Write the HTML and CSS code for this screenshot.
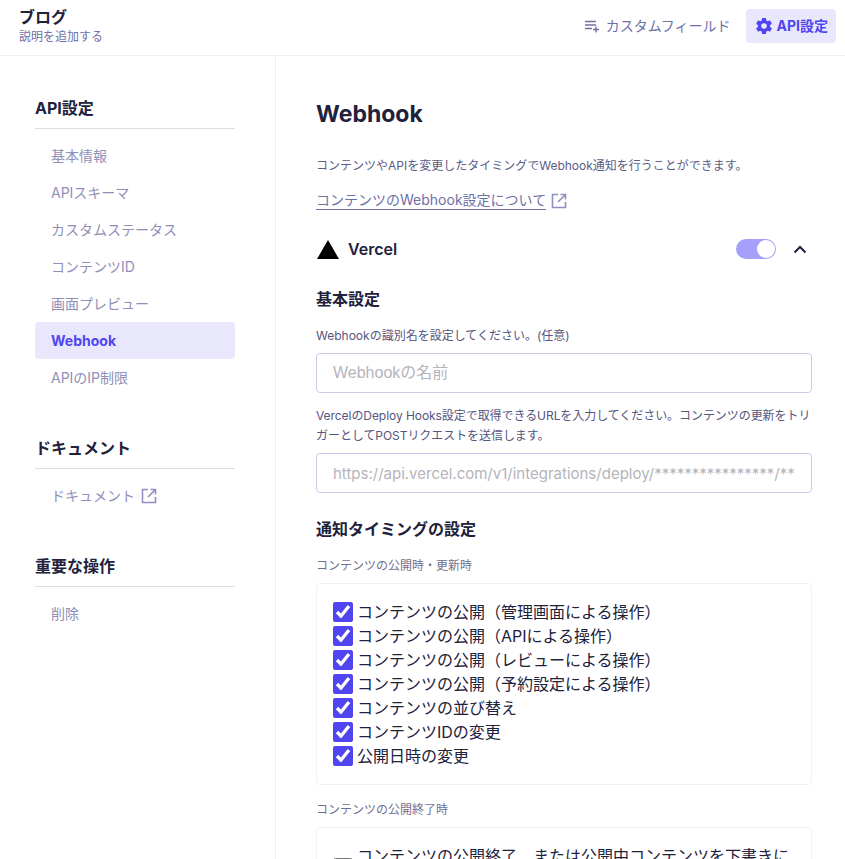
FILE: index.html
```html
<!DOCTYPE html>
<html lang="ja">

<head>
  <meta charset="UTF-8" />
  <meta name="viewport" content="width=device-width, initial-scale=1" />
  <title>Webhook</title>
  <link rel="stylesheet" href="styles.css">
</head>

<body>

  <header class="topbar">
    <div class="service">
      <h1>ブログ</h1>
      <p>説明を追加する</p>
    </div>
    <nav class="topnav">
      <a class="topnav-link" href="#">
        <svg class="icon" viewBox="0 0 16 16" fill="none" stroke="currentColor" stroke-width="1.4">
          <path d="M1 3.500h11M1 7h11M1 10.500h7M12 8.500v6M9 11.500h6" />
        </svg>
        カスタムフィールド
      </a>
      <a class="topnav-link active" href="#">
        <svg class="icon" viewBox="2 2 20 20" fill="currentColor">
          <path fill-rule="evenodd" d="M19.4 13c.04-.33.06-.66.06-1s-.02-.67-.06-1l2.11-1.65c.19-.15.24-.42.12-.64l-2-3.46c-.12-.22-.39-.3-.61-.22l-2.49 1c-.52-.4-1.08-.73-1.69-.98l-.38-2.65A.49.49 0 0 0 14 2h-4c-.25 0-.46.18-.49.42l-.38 2.65c-.61.25-1.17.59-1.69.98l-2.49-1c-.23-.09-.49 0-.61.22l-2 3.46c-.13.22-.07.49.12.64L4.57 11c-.04.33-.07.67-.07 1s.03.67.07 1l-2.11 1.65c-.19.15-.24.42-.12.64l2 3.46c.12.22.39.3.61.22l2.49-1c.52.4 1.08.73 1.69.98l.38 2.65c.03.24.24.42.49.42h4c.25 0 .46-.18.49-.42l.38-2.65c.61-.25 1.17-.59 1.69-.98l2.49 1c.23.09.49 0 .61-.22l2-3.46c.12-.22.07-.49-.12-.64L19.4 13zM12 15.500a3.500 3.500 0 1 1 0-7 3.500 3.500 0 0 1 0 7z" />
        </svg>
        API設定
      </a>
    </nav>
  </header>

  <div class="layout">
    <aside class="sidebar">
      <section class="side-group">
        <h2>API設定</h2>
        <ul>
          <li><a href="#">基本情報</a></li>
          <li><a href="#">APIスキーマ</a></li>
          <li><a href="#">カスタムステータス</a></li>
          <li><a href="#">コンテンツID</a></li>
          <li><a href="#">画面プレビュー</a></li>
          <li><a class="current" href="#">Webhook</a></li>
          <li><a href="#">APIのIP制限</a></li>
        </ul>
      </section>
      <section class="side-group">
        <h2>ドキュメント</h2>
        <ul>
          <li>
            <a href="#">ドキュメント
              <svg class="ext" viewBox="0 0 16 16" fill="none" stroke="currentColor" stroke-width="1.6">
                <path d="M7 1.500H1.500v13h13V9M9.500 1.500h5v5M14.500 1.500L7 9" />
              </svg>
            </a>
          </li>
        </ul>
      </section>
      <section class="side-group">
        <h2>重要な操作</h2>
        <ul>
          <li><a href="#">削除</a></li>
        </ul>
      </section>
    </aside>

    <main class="content">
      <h2 class="page-title">Webhook</h2>
      <p class="lead">コンテンツやAPIを変更したタイミングでWebhook通知を行うことができます。</p>
      <p class="doc-link">
        <a href="#">コンテンツのWebhook設定について</a>
        <svg class="ext" viewBox="0 0 16 16" fill="none" stroke="currentColor" stroke-width="1.6">
          <path d="M7 1.500H1.500v13h13V9M9.500 1.500h5v5M14.500 1.500L7 9" />
        </svg>
      </p>

      <div class="hook-head">
        <svg class="vercel" viewBox="0 0 22 19" fill="#000">
          <path d="M11 0l11 19H0z" />
        </svg>
        <span class="hook-name">Vercel</span>
        <span class="switch"><span class="knob"></span></span>
        <svg class="chevron" viewBox="0 0 14 9" fill="none" stroke="currentColor" stroke-width="2">
          <path d="M1.500 7.500L7 2l5.500 5.500" />
        </svg>
      </div>

      <h3>基本設定</h3>
      <label class="field-label">Webhookの識別名を設定してください。(任意)</label>
      <input class="text-input" type="text" placeholder="Webhookの名前" />
      <label class="field-label url-label">VercelのDeploy Hooks設定で取得できるURLを入力してください。コンテンツの更新をトリガーとしてPOSTリクエストを送信します。</label>
      <input class="text-input url-input" type="text" placeholder="https://api.vercel.com/v1/integrations/deploy/****************/**********" />

      <h3 class="timing-title">通知タイミングの設定</h3>
      <p class="group-label">コンテンツの公開時・更新時</p>
      <div class="check-box">
        <label class="check"><input type="checkbox" checked /><span>コンテンツの公開（管理画面による操作）</span></label>
        <label class="check"><input type="checkbox" checked /><span>コンテンツの公開（APIによる操作）</span></label>
        <label class="check"><input type="checkbox" checked /><span>コンテンツの公開（レビューによる操作）</span></label>
        <label class="check"><input type="checkbox" checked /><span>コンテンツの公開（予約設定による操作）</span></label>
        <label class="check"><input type="checkbox" checked /><span>コンテンツの並び替え</span></label>
        <label class="check"><input type="checkbox" checked /><span>コンテンツIDの変更</span></label>
        <label class="check"><input type="checkbox" checked /><span>公開日時の変更</span></label>
      </div>
      <p class="group-label">コンテンツの公開終了時</p>
      <div class="check-box">
        <label class="check"><input type="checkbox" /><span>コンテンツの公開終了、または公開中コンテンツを下書きに変更した時</span></label>
      </div>
    </main>
  </div>

</body>

</html>
```

FILE: styles.css
```css
* {
  box-sizing: border-box;
}

html,
body {
  height: 100%;
}

body {
  margin: 0;
  overflow: hidden;
  background-color: #fff;
  color: #21213b;
  font-family: Inter, 'Noto Sans CJK JP', sans-serif;
}

h1,
h2,
h3,
p,
ul {
  margin: 0;
  padding: 0;
}

a {
  color: inherit;
  text-decoration: none;
}

.topbar {
  display: flex;
  align-items: flex-start;
  justify-content: space-between;
  height: 56px;
  padding: 0 9px 0 19px;
  border-bottom: 1px solid #f0f0f3;
}

.service {
  padding-top: 7px;
}

.service h1 {
  font-size: 16px;
  line-height: 20px;
  font-weight: 700;
}

.service p {
  margin-top: 2px;
  font-size: 12px;
  line-height: 16px;
  color: #6f6fa8;
}

.topnav {
  display: flex;
  align-items: center;
  gap: 7px;
  margin-top: 9px;
}

.topnav-link {
  display: flex;
  align-items: center;
  gap: 6px;
  height: 34px;
  padding: 0 8px;
  border-radius: 4px;
  font-size: 14px;
  line-height: 20px;
  color: #6f6fa8;
}

.topnav-link.active {
  gap: 5px;
  background-color: #e8e7fc;
  color: #4f46f0;
  font-weight: 700;
  padding: 0 8px 0 10px;
}

.icon {
  width: 16px;
  height: 16px;
  flex: none;
}

.layout {
  display: flex;
  height: calc(100% - 56px);
}

.sidebar {
  flex: none;
  width: 276px;
  padding: 41px 40px 0 35px;
  border-right: 1px solid #f0f0f3;
}

.side-group {
  margin-bottom: 41px;
}

.side-group h2 {
  height: 32px;
  font-size: 16px;
  line-height: 22px;
  font-weight: 700;
  border-bottom: 1px solid #dcdce2;
}

.side-group ul {
  list-style: none;
  margin-top: 8px;
}

.side-group a {
  display: flex;
  align-items: center;
  gap: 6px;
  height: 37px;
  padding-left: 16px;
  border-radius: 4px;
  font-size: 14px;
  line-height: 20px;
  color: #8f8fb8;
}

.side-group a.current {
  background-color: #e8e7fc;
  color: #4f46f0;
  font-weight: 700;
}

.ext {
  width: 16px;
  height: 16px;
  flex: none;
  color: #8f8fc0;
}

.content {
  flex: 1;
  min-width: 0;
  padding: 43px 33px 0 40px;
}

.page-title {
  font-size: 23px;
  line-height: 30px;
  font-weight: 700;
}

.lead {
  margin-top: 28px;
  font-size: 12px;
  line-height: 18px;
  color: #5c5c85;
}

.doc-link {
  display: flex;
  align-items: center;
  gap: 5px;
  margin-top: 16px;
  font-size: 14px;
  line-height: 20px;
  color: #6f6fa8;
}

.doc-link a {
  border-bottom: 1px solid #6f6fa8;
  line-height: 18px;
}

.hook-head {
  display: flex;
  align-items: center;
  height: 24px;
  margin-top: 27px;
}

.vercel {
  width: 22px;
  height: 19px;
  margin-left: 1px;
}

.hook-name {
  flex: 1;
  margin-left: 9px;
  font-size: 16px;
  line-height: 20px;
  font-weight: 600;
}

.switch {
  display: flex;
  justify-content: flex-end;
  align-items: center;
  width: 40px;
  height: 20px;
  padding: 0 1px;
  border-radius: 10px;
  background-color: #a5a1fa;
}

.knob {
  width: 18px;
  height: 18px;
  border-radius: 50%;
  background-color: #fff;
}

.chevron {
  width: 14px;
  height: 9px;
  margin: 0 5px 0 17px;
}

.content h3 {
  margin-top: 27px;
  font-size: 16px;
  line-height: 22px;
  font-weight: 700;
}

.field-label {
  display: block;
  margin-top: 16px;
  font-size: 12px;
  line-height: 20px;
  color: #55557e;
}

.url-label {
  margin-top: 13px;
  letter-spacing: -0.06px;
}

.text-input {
  display: block;
  width: 100%;
  height: 40px;
  margin-top: 7px;
  padding: 0 16px;
  border: 1px solid #cbc8e8;
  border-radius: 4px;
  font-family: 'Liberation Sans', 'Noto Sans CJK JP', sans-serif;
  font-size: 16px;
  color: #21213b;
}

.url-input {
  font-family: Inter, sans-serif;
  font-size: 15px;
}

.text-input::placeholder {
  color: #b4b4ba;
}

.content h3.timing-title {
  margin-top: 25px;
  margin-bottom: 16px;
}

.group-label {
  margin-top: 15px;
  font-size: 12px;
  line-height: 20px;
  color: #6f6f8f;
}

.check-box {
  margin: 7px 0 15px;
  padding: 16px;
  border: 1px solid #f0f0f5;
  border-radius: 4px;
}

.check {
  display: flex;
  align-items: center;
  gap: 4px;
  font-size: 16px;
  line-height: 24px;
}

.check input {
  width: 20px;
  height: 20px;
  margin: 0;
  flex: none;
  accent-color: #4f46f0;
}
```
